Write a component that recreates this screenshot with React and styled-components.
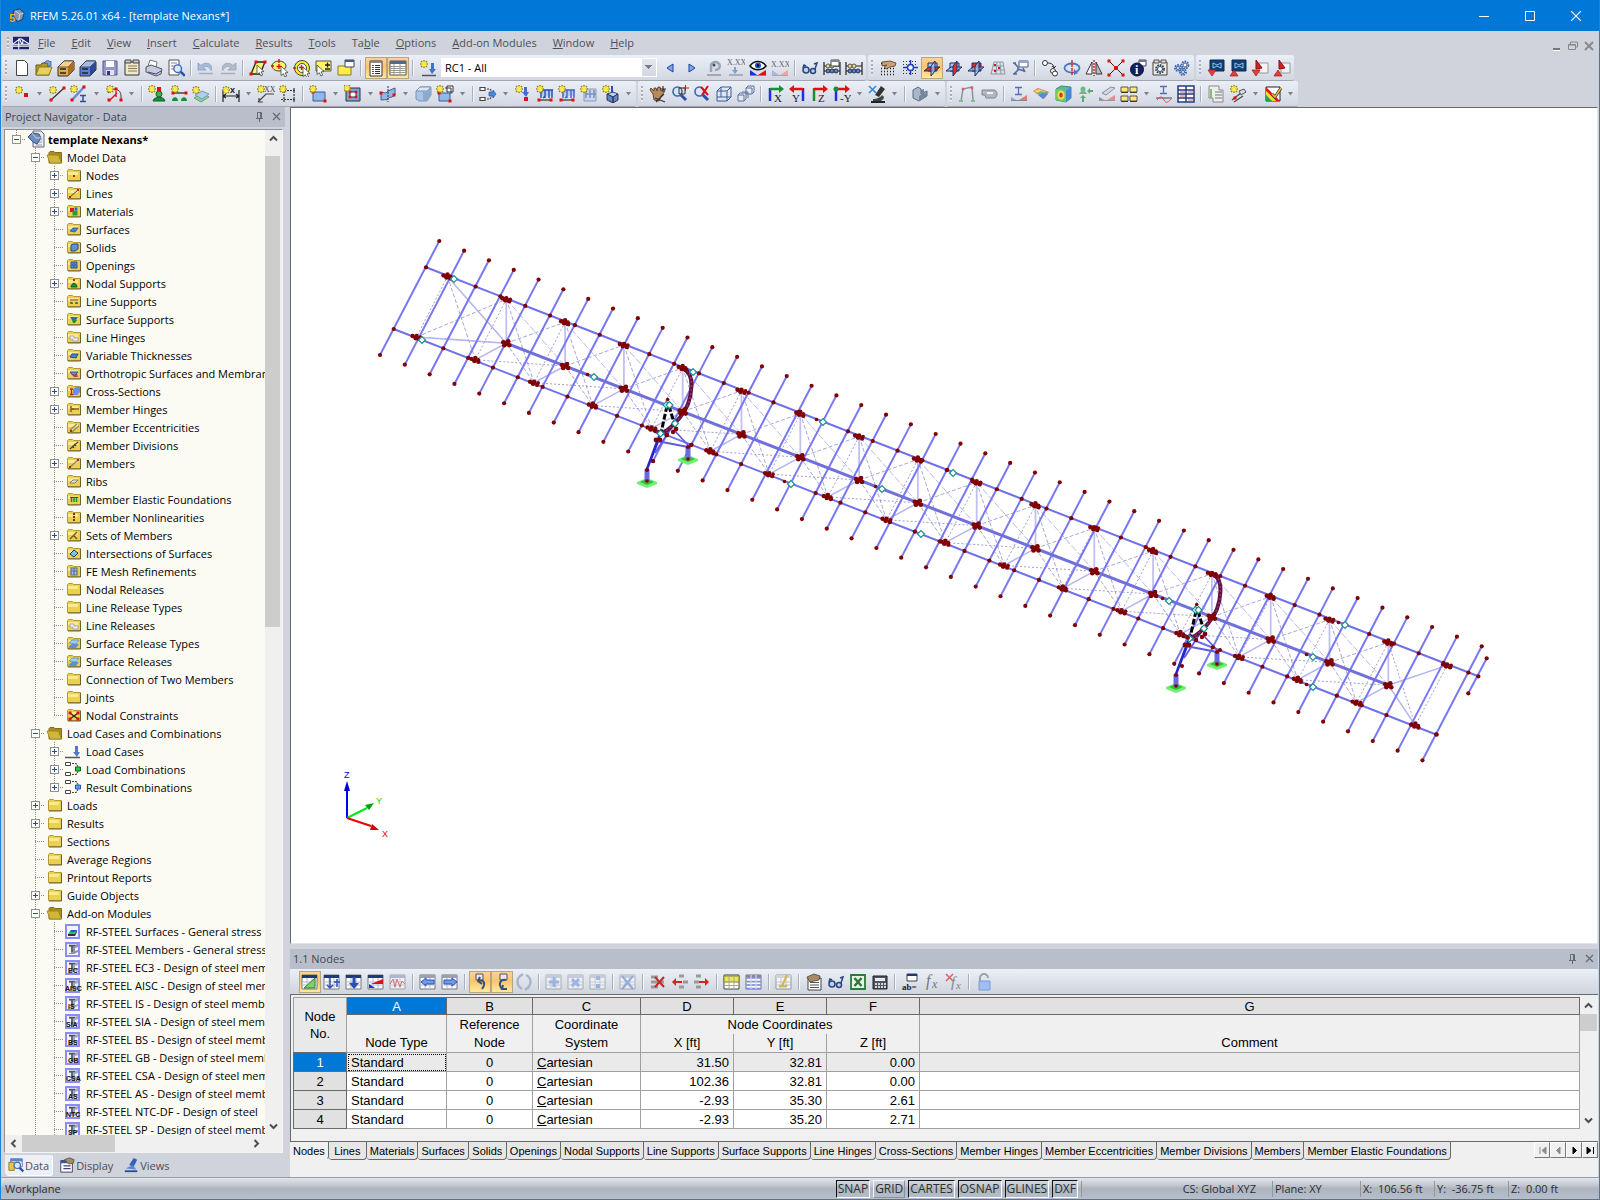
import { Fragment, useState } from "react";
import styled, { createGlobalStyle, css } from "styled-components";

const GlobalStyle = createGlobalStyle`
  * {
    box-sizing: border-box;
  }

  body {
    margin: 0;
    overflow: hidden;
    font-family: "Open Sans", "Noto Sans", sans-serif;
    font-size: 11px;
    color: #000;
  }

  button, select {
    font: inherit;
    color: inherit;
    margin: 0;
    padding: 0;
    border: 0;
    background: none;
  }

  svg {
    display: block;
    flex: none;
  }
`;

/* ---------- icon parts ---------- */

const RED = "#e01010";
const BLUE = "#2a50b8";
const GREEN = "#159035";

const L = ({ d, c = "#333", w = 1, f = "none", dash }) => (
  <path d={d} stroke={c} strokeWidth={w} fill={f} strokeDasharray={dash} />
);

const Dot = ({ x, y, c = RED, s = 3 }) => (
  <rect x={x - s / 2} y={y - s / 2} width={s} height={s} fill={c} />
);

const Star = ({ x = 0, y = 0 }) => (
  <g transform={`translate(${x} ${y})`}>
    <path d="M4 0v8M0 4h8M1 1l6 6M7 1l-6 6" stroke="#9c8a10" strokeWidth="1.6" />
    <path d="M4 1v6M1 4h6M2 2l4 4M6 2l-4 4" stroke="#fff04a" strokeWidth="1.2" />
  </g>
);

const Cursor = ({ x = 9, y = 7 }) => (
  <path
    transform={`translate(${x} ${y})`}
    d="M0 0l7 6.5-3 .4 1.7 3.2-1.8.9-1.6-3.3L0 9.5z"
    fill="#fff"
    stroke="#444"
    strokeWidth=".8"
  />
);

const Txt = ({ x, y, s = 8, c = "#222", children, b, serif }) => (
  <text
    x={x}
    y={y}
    fontSize={s}
    fill={c}
    fontWeight={b ? 700 : 400}
    fontFamily={serif ? "Liberation Serif, serif" : "Liberation Sans, sans-serif"}
  >
    {children}
  </text>
);

const Glass = ({ x = 0, y = 0 }) => (
  <g transform={`translate(${x} ${y})`}>
    <path d="M8 8l6 6" stroke="#2450b0" strokeWidth="3" />
    <circle cx="5.5" cy="5.5" r="4.5" fill="#d6e8fa" stroke="#3c64b8" strokeWidth="1.6" />
  </g>
);

const Cabinet = ({ f, t, s }) => (
  <Fragment>
    <path d="M1 8l6-6h9l1 1v8l-6 6H1z" fill={f} stroke="#333" />
    <path d="M1 8l6-6h10l-6 6z" fill={t} stroke="#333" strokeWidth=".7" />
    <path d="M11 8l6-5v8l-6 6z" fill={s} />
    <path d="M3 10h6M3 14h6" stroke="#222" strokeWidth="1.5" />
  </Fragment>
);

const Workplane = ({ flat, front, side }) => (
  <Fragment>
    <path d="M5 4h9v8H5z" fill={front} stroke="#16306a" />
    <path d="M1 12l5-4h11l-5 4z" fill={flat} stroke="#16306a" />
    <path d="M8 7l4-5v10l-4 5z" fill={side} stroke="#16306a" />
  </Fragment>
);

const AxisView = ({ a, b, t, flip }) => (
  <Fragment>
    {flip ? (
      <Fragment>
        <L d="M14 3v13" c={b} w="2.5" />
        <L d="M14 4H3" c={a} w="2.5" />
        <path d="M5 0v8L0 4z" fill={a} />
      </Fragment>
    ) : (
      <Fragment>
        <L d="M3 3v13" c={b} w="2.5" />
        <L d="M3 4h11" c={a} w="2.5" />
        <path d="M12 0v8l5-4z" fill={a} />
      </Fragment>
    )}
    <Txt x={flip ? 3 : 7} y="17" s="11" serif>
      {t}
    </Txt>
  </Fragment>
);

const MemberLoad = ({ c = BLUE }) => (
  <Fragment>
    <path d="M4 5h13v6H4z" fill="#b9caf0" />
    <L d="M4 5h13M5 5v8M9 5v8M13 5v8M16 5v8M7 13l2-2" c={c} w="1.4" />
    <L d="M2 15h14" c="#555" w="1.5" />
    <Dot x={3} y={15} />
    <Dot x={15} y={15} />
  </Fragment>
);

const Beads = () => (
  <Fragment>
    <L d="M1 3v13M17 3v13M1 7h16M1 12h16" c="#222" w="1.2" />
    <circle cx="5" cy="7" r="2" fill="#f5e080" stroke="#555" />
    <circle cx="9" cy="7" r="2" fill="#f5e080" stroke="#555" />
    <circle cx="5" cy="12" r="2" fill="#5b86d8" stroke="#234" />
    <circle cx="9" cy="12" r="2" fill="#5b86d8" stroke="#234" />
    <circle cx="13" cy="12" r="2" fill="#5b86d8" stroke="#234" />
  </Fragment>
);

const MiniTable = ({ tone = "#203a78", children }) => (
  <Fragment>
    <path d="M1 2h15v14H1z" fill="#fff" stroke="#777" />
    <path d="M1 2h15v3H1z" fill={tone} />
    <L d="M1 9h15M1 12h15M6 5v11M11 5v11" c="#b5b9c4" />
    {children}
  </Fragment>
);

const Gear = ({ x, y, r, c = "#3d62a8" }) => (
  <g>
    <circle cx={x} cy={y} r={r} fill="#c8d8ee" stroke={c} strokeWidth="1.8" strokeDasharray="1.6 1" />
    <circle cx={x} cy={y} r={r - 1.5} fill="#fff" stroke={c} />
  </g>
);

const Screen = () => (
  <Fragment>
    <path d="M3 1h14v11H3z" fill="#123f74" stroke="#0b2a50" />
    <L d="M6 4l4 2 4-2M6 9l4-2 4 2M6 4v5M14 4v5" c="#8fc4f0" />
  </Fragment>
);

const ICONS = {
  new: <path d="M3.5 1.5h8l3 3v12h-11z" fill="#fff" stroke="#444" />,
  open: (
    <Fragment>
      <path d="M1 6h5l1-2h7v12H1z" fill="#b89a20" stroke="#6b5a10" />
      <path d="M1 16l3-8h13l-3 8z" fill="#e6d060" stroke="#8a7620" />
      <path d="M9 4c2-3 5-3 6-1l1-1v5h-4l1-2c-1-1-2-1-4-1z" fill="#7ba6e0" stroke="#34588c" strokeWidth=".7" />
    </Fragment>
  ),
  archive: <Cabinet f="#e0a850" t="#f6d08c" s="#a86e20" />,
  archiveBlue: <Cabinet f="#5b80d0" t="#a4bcec" s="#2c4894" />,
  save: (
    <Fragment>
      <path d="M2 2h14v14H2z" fill="#9498c8" stroke="#555a88" />
      <path d="M5 2h8v6H5z" fill="#fff" />
      <path d="M5 11h8v5H5z" fill="#dfe2ee" />
      <path d="M6 12h3v4H6z" fill="#333a70" />
    </Fragment>
  ),
  notes: (
    <Fragment>
      <path d="M2 3h14v13H2z" fill="#f0e8cc" stroke="#333" />
      <path d="M2 1h6v3H2zM10 1h6v3h-6z" fill="#ccc" stroke="#444" />
      <L d="M5 7h9M5 9.5h9M5 12h9" c="#8a7a50" />
    </Fragment>
  ),
  print: (
    <Fragment>
      <path d="M5 1l7 2-1 6-8-2z" fill="#fff" stroke="#777" />
      <path d="M1 8l5-2 11 4-1 5-5 2L1 13z" fill="#c8ccd8" stroke="#556" />
      <path d="M3 13l8 2 5-3" fill="none" stroke="#3a4a80" />
    </Fragment>
  ),
  preview: (
    <Fragment>
      <path d="M2 1h10v15H2z" fill="#fff" stroke="#555" />
      <L d="M4 4h6M4 7h5M4 10h3" c="#888" />
      <g transform="translate(6 5) scale(.85)">
        <Glass />
      </g>
    </Fragment>
  ),
  undo: (
    <Fragment>
      <path d="M1 4v7h8L6 8.5c3-2 7-1 8 3 3-6-5-10-10-5z" fill="#a9bcdc" stroke="#8096b8" strokeWidth=".7" />
      <L d="M2 14.5h14" c="#a8afbb" w="1.5" />
    </Fragment>
  ),
  redo: (
    <Fragment>
      <path d="M17 4v7H9l3-2.5c-3-2-7-1-8 3-3-6 5-10 10-5z" fill="#b4bccb" stroke="#939dae" strokeWidth=".7" />
      <L d="M2 14.5h14" c="#a8afbb" w="1.5" />
    </Fragment>
  ),
  selPara: (
    <Fragment>
      <path d="M7 3h9l-5 12H2z" fill="#fff36a" stroke="#222" strokeWidth="1.3" />
      <Dot x={7} y={3} />
      <Dot x={16} y={3} />
      <Dot x={2} y={15} />
      <Cursor x={8} y={6} />
    </Fragment>
  ),
  selEllipse: (
    <Fragment>
      <ellipse cx="8" cy="7" rx="7" ry="5" fill="#fff36a" stroke="#444" />
      <L d="M8 0v4M8 5v5M5.5 7.5h5M0 7h3" c={RED} w="1.4" />
      <Cursor x={10} y={7} />
    </Fragment>
  ),
  selRing: (
    <Fragment>
      <circle cx="9" cy="9" r="7.5" fill="#ffef20" stroke="#444" />
      <circle cx="9" cy="9" r="4.5" fill="#fff" stroke="#444" />
      <L d="M8.5 6v5M6 8.5h5M0 9h3" c={RED} w="1.4" />
      <Cursor x={10} y={8} />
    </Fragment>
  ),
  selPlus: (
    <Fragment>
      <path d="M1 2h15v10H1z" fill="#fff36a" stroke="#555" />
      <L d="M10 6h5M12.5 3.5v5M10 10h5" c="#222" w="1.3" />
      <Cursor x={2} y={6} />
    </Fragment>
  ),
  selWindow: (
    <Fragment>
      <path d="M1 7h13v9H1z" fill="#ffed50" stroke="#8a7a20" />
      <path d="M8 1h9v7H8z" fill="#fff" stroke="#445" />
      <path d="M8 1h9v2H8z" fill="#445a88" />
    </Fragment>
  ),
  navigator: (
    <Fragment>
      <path d="M3 2h12v15H3z" fill="#fff" stroke="#333" />
      <path d="M3 2h12v2H3z" fill="#888" />
      <L d="M5 6.5h2M5 8.5h2M5 10.5h2M5 12.5h2M5 14.5h2" c="#a03030" />
      <L d="M8 6.5h5M8 8.5h5M8 10.5h5M8 12.5h5M8 14.5h5" c="#333" />
    </Fragment>
  ),
  tables: (
    <Fragment>
      <path d="M1 2h16v14H1z" fill="#fff" stroke="#555" />
      <path d="M1 2h16v3H1z" fill="#506898" />
      <L d="M1 7.5h16M1 9.5h16M1 11.5h16M1 13.5h16M5 5v11M11 5v11" c="#9a9a90" />
    </Fragment>
  ),
  loadStar: (
    <Fragment>
      <Star x={1} y={1} />
      <path d="M12 4h3v6h2l-4 5-3-5h2z" fill="#3f6fd0" />
      <L d="M3 16.5h14" c="#555" w="1.5" />
    </Fragment>
  ),
  prev: <path d="M12 5v8L6 9z" fill="#7aacf4" stroke="#1a3e9c" />,
  next: <path d="M6 5v8l6-4z" fill="#7aacf4" stroke="#1a3e9c" />,
  showLoads: (
    <Fragment>
      <path d="M6 13V8a4.500 4 0 1 1 4 3" fill="#d5dbe6" stroke="#9aa5b8" strokeWidth="2.5" />
      <circle cx="9" cy="6" r="1.500" fill="#444b5a" />
      <L d="M2 16h14" c="#a3a8b2" w="2" />
    </Fragment>
  ),
  loadValues: (
    <Fragment>
      <Txt x="0" y="6" s="8" c="#666" serif>X.XX</Txt>
      <L d="M8 8v5" c="#7f9fd4" w="2" />
      <path d="M5 11h6l-3 4z" fill="#7f9fd4" />
      <L d="M2 16h14" c="#999ea8" w="1.5" />
    </Fragment>
  ),
  eye: (
    <Fragment>
      <path d="M1 7c4-6 12-6 16 0-4 5-12 5-16 0z" fill="#fff" stroke="#111" strokeWidth="1.5" />
      <circle cx="9" cy="6.5" r="3" fill="#1e58c8" />
      <circle cx="9" cy="6.5" r="1.2" fill="#000" />
      <path d="M1 11v5h7z" fill="#1830e0" />
      <path d="M9 16l8-5v5z" fill={RED} />
      <L d="M1 16.5h16" c="#888" />
    </Fragment>
  ),
  resultValues: (
    <Fragment>
      <Txt x="0" y="8" s="8" c="#666" serif>X.XX</Txt>
      <path d="M1 11v5h7z" fill="#a8b4e8" />
      <path d="M9 16l8-5v5z" fill="#efa4a4" />
      <L d="M1 16.5h16" c="#aaa" />
    </Fragment>
  ),
  glasses: (
    <Fragment>
      <circle cx="5" cy="11" r="3" fill="#bcd0ee" stroke="#2b4480" strokeWidth="1.5" />
      <circle cx="12" cy="12" r="2.500" fill="#bcd0ee" stroke="#2b4480" strokeWidth="1.5" />
      <L d="M2 9l1-3 2 1M14 10l2-6-3 1" c="#2b4480" w="1.5" />
    </Fragment>
  ),
  beadsWin: (
    <Fragment>
      <Beads />
      <path d="M8 1h8v6H8z" fill="#fff" stroke="#445" />
      <path d="M8 1h8v2H8z" fill="#888" />
    </Fragment>
  ),
  beads: <Beads />,
  handGrid: (
    <Fragment>
      <L d="M2 9.5h15M2 12.500h15M2 15.500h15M2 4.500h3M12 5.500h5" c="#222" w="1.500" dash="1 2" />
      <path d="M3 3l8-1 6 2-1 3-5 1-4 2-2-2 3-2-5 1z" fill="#caa27a" stroke="#5a3a20" strokeWidth=".8" />
    </Fragment>
  ),
  gridSun: (
    <Fragment>
      <L d="M2 2.5h15M2 5.5h15M2 8.5h15M2 11.5h15M2 14.5h15" c="#333" dash="1 2" />
      <circle cx="9.5" cy="8.5" r="3" fill="#fff" stroke="#1f3fc0" strokeWidth="1.5" />
      <L d="M9.5 1v4M9.5 12v4M2 8.5h4M13 8.5h4" c="#1f3fc0" w="1.500" />
    </Fragment>
  ),
  planeXY: <Workplane flat="#f02828" front="#a4cbf4" side="rgba(150,195,245,.75)" />,
  planeYZ: <Workplane flat="rgba(164,203,244,.8)" front="#a4cbf4" side="#f02828" />,
  planeXZ: <Workplane flat="rgba(164,203,244,.6)" front="#f02828" side="rgba(150,195,245,.75)" />,
  skewGrid: (
    <Fragment>
      <L d="M5 3h9l2 12H2zM4 7h11M3 11h12M8 3L7 15M11 3l1 12" c="#8d97a8" />
      <Dot x={6} y={6} s={2} />
      <Dot x={10} y={9} s={2} />
      <Dot x={6} y={12} s={2} />
    </Fragment>
  ),
  snapWin: (
    <Fragment>
      <path d="M8 2h9v6H8z" fill="#fff" stroke="#445a88" />
      <path d="M8 2h9v2H8z" fill="#99a8c8" />
      <L d="M3 4l4 4v3l-4 4M2 4h3M7 10l6 2M12 9l2 4M2 15h4" c="#546a9c" w="1.6" />
    </Fragment>
  ),
  moveCopy: (
    <Fragment>
      <circle cx="4" cy="4" r="2.5" fill="#fff" stroke="#333" />
      <circle cx="12" cy="12" r="2.5" fill="#fff" stroke="#333" />
      <circle cx="14" cy="14.5" r="2.5" fill="#fff" stroke="#333" />
      <L d="M7 4c3 0 5 1 6 4M11 7l2 2 2-2" c="#333" />
    </Fragment>
  ),
  rotate: (
    <Fragment>
      <ellipse cx="9" cy="9" rx="7.5" ry="4.5" fill="none" stroke="#4a78c0" strokeWidth="1.8" />
      <L d="M9 1v16" c={RED} dash="3 1" w="1.3" />
      <path d="M11 10v6l4-2z" fill="#4a78c0" />
    </Fragment>
  ),
  mirror: (
    <Fragment>
      <path d="M7 3v12H1z" fill="#fff" stroke="#333" />
      <path d="M11 3v12h6z" fill="#b8bcc6" stroke="#333" />
      <L d="M9 1v16" c={RED} dash="2 1" w="1.3" />
    </Fragment>
  ),
  connect: (
    <Fragment>
      <L d="M2 2l14 14M16 2L2 16" c="#222" />
      {[[2, 2], [16, 2], [2, 16], [16, 16]].map(([x, y]) => (
        <Dot key={`${x}${y}`} x={x} y={y} />
      ))}
      <Dot x={9} y={9} s={4} />
    </Fragment>
  ),
  info: (
    <Fragment>
      <path d="M10 1h7v6h-7z" fill="#fff" stroke="#445" />
      <path d="M10 1h7v2h-7z" fill="#778" />
      <circle cx="8" cy="10.5" r="6.5" fill="#12205c" stroke="#0a1238" />
      <Txt x="6" y="15" s="12" c="#fff" b serif>i</Txt>
    </Fragment>
  ),
  gearBox: (
    <Fragment>
      <path d="M2 3h14v13H2z" fill="#f2ead8" stroke="#444" />
      <L d="M3 1h5v3H3zM10 1h5v3h-5z" c="#555" f="#ddd" />
      <Gear x={9} y={10} r={4} c="#304468" />
    </Fragment>
  ),
  gears: (
    <Fragment>
      <Gear x={5} y={9} r={3} />
      <Gear x={12} y={6} r={3.5} />
      <Gear x={10} y={13} r={3} />
    </Fragment>
  ),
  exportDown: (
    <Fragment>
      <Screen />
      <path d="M1 11h8l-4 6z" fill="#e04040" stroke="#a01818" strokeWidth=".7" />
    </Fragment>
  ),
  exportUp: (
    <Fragment>
      <Screen />
      <path d="M1 17h8l-4-6z" fill="#e04040" stroke="#a01818" strokeWidth=".7" />
    </Fragment>
  ),
  pdfDown: (
    <Fragment>
      <path d="M8 4h9v10H8z" fill="#f4f4f4" stroke="#999" />
      <path d="M5 1l6 8-6 1z" fill="#d82020" stroke="#8c1010" />
      <path d="M1 11h8l-4 6z" fill="#e04040" stroke="#a01818" strokeWidth=".7" />
    </Fragment>
  ),
  pdfUp: (
    <Fragment>
      <path d="M8 4h9v10H8z" fill="#f4f4f4" stroke="#999" />
      <path d="M6 1l6 8-6 1z" fill="#d82020" stroke="#8c1010" />
      <path d="M1 17h8l-4-6z" fill="#e04040" stroke="#a01818" strokeWidth=".7" />
    </Fragment>
  ),

  newNode: (
    <Fragment>
      <Star x={2} y={1} />
      <Dot x={13} y={10} s={4} />
    </Fragment>
  ),
  newLine: (
    <Fragment>
      <L d="M3 15L16 3" c="#333" w="1.3" />
      <Dot x={16} y={3} />
      <Dot x={3} y={15} />
      <Star x={1} y={1} />
    </Fragment>
  ),
  newMember: (
    <Fragment>
      <L d="M2 15L14 2" c="#5f8fd8" w="2.5" />
      <Dot x={14} y={2} />
      <Dot x={2} y={15} />
      <Star x={0} y={0} />
      <L d="M10 10.5h6M10 16.5h6M13 10v7" c="#3050a0" w="1.5" />
    </Fragment>
  ),
  newArc: (
    <Fragment>
      <path d="M3 8C7 2 16 3 16 11v4" fill="none" stroke="#444" />
      <L d="M4 16l8-8M11 6v6" c={RED} w="1.3" />
      <Dot x={4} y={15} />
      <Dot x={16} y={15} />
      <Dot x={11} y={4} />
      <Star x={1} y={0} />
    </Fragment>
  ),
  nodeSupport: (
    <Fragment>
      <circle cx="11" cy="9" r="3" fill="#3fae55" stroke="#16632a" />
      <path d="M5 16c1-5 11-5 12 0z" fill={GREEN} stroke="#16632a" />
      <Dot x={11} y={4} s={4} />
      <Star x={0} y={0} />
    </Fragment>
  ),
  lineSupport: (
    <Fragment>
      <L d="M4 8h12" c="#444" w="1.5" />
      <Dot x={3} y={8} />
      <Dot x={16} y={8} />
      <path d="M2 16c0-5 6-5 6 0zM11 16c0-5 6-5 6 0z" fill={GREEN} />
      <Star x={1} y={0} />
    </Fragment>
  ),
  surfSupport: (
    <Fragment>
      <path d="M2 13l8-5 7 4-8 5z" fill="#8fcf9c" stroke="#5ea870" />
      <path d="M3 10l7-4 7 3-7 5z" fill="#b0cdf0" stroke="#7b98c4" />
      <Star x={0} y={1} />
    </Fragment>
  ),
  dimension: (
    <Fragment>
      <L d="M1 5v12M17 5v12M1 11h16M4 9l-3 2 3 2M14 9l3 2-3 2" c="#222" w="1.200" />
      <Txt x="8" y="8" s="9" b>x</Txt>
      <Star x={0} y={1} />
    </Fragment>
  ),
  comment: (
    <Fragment>
      <L d="M17 9H9l-8 8M2 13v4h4" c="#444" w="1.2" />
      <Txt x="7" y="7" s="8" c="#444" serif>XX</Txt>
      <Star x={0} y={0} />
    </Fragment>
  ),
  region: (
    <Fragment>
      <L d="M5 3v14M15 3v14M2 5.500h15M2 14.500h15" c="#333" dash="2 1" w="1.2" />
      <Star x={0} y={0} />
    </Fragment>
  ),
  newSurface: (
    <Fragment>
      <path d="M4 7h12v9H4z" fill="#8db8e8" stroke="#3c5c94" />
      <Dot x={4} y={7} />
      <Dot x={16} y={16} />
      <Star x={0} y={0} />
    </Fragment>
  ),
  opening: (
    <Fragment>
      <path d="M2 3h14v13H2z" fill="#7ba4dc" stroke="#333" />
      <path d="M6 7h6v5H6z" fill="#fff" stroke="#333" />
      {[[6, 7], [12, 7], [6, 12], [12, 12]].map(([x, y]) => (
        <Dot key={`${x}${y}`} x={x} y={y} s={2.5} />
      ))}
      <Star x={-1} y={-1} />
    </Fragment>
  ),
  curved: (
    <Fragment>
      <path d="M2 8c3-2 4 2 7-2l7-3v7c-5 4-6 1-8 5-2-1-3 0-6 0z" fill="#8db8e8" stroke="#3c5c94" />
      <L d="M9 1v16" c="#333" dash="2 1" />
      <Dot x={2} y={8} />
      <Dot x={15} y={10} />
    </Fragment>
  ),
  solid: (
    <Fragment>
      <path d="M2 6l4-4h11v8l-4 6H5l-3-2z" fill="#a9c4e4" stroke="#7d93b4" />
      <path d="M2 6l4-4h11l-4 4z" fill="#dbe8f6" stroke="#7d93b4" />
      <path d="M9 6h4l4-4v8l-4 6H9z" fill="#8fa9cc" />
    </Fragment>
  ),
  newSet: (
    <Fragment>
      <L d="M11 1h6v6h-6zM9 3h6v6" c="#333" f="#fff" />
      <path d="M3 8h11v8H3z" fill="#8db8e8" stroke="#3c5c94" />
      <Dot x={3} y={8} />
      <Dot x={14} y={16} />
      <Star x={0} y={0} />
    </Fragment>
  ),
  combine: (
    <Fragment>
      <L d="M1 2.500h5v3H1zM1 12.500h5v3H1z" c="#444" f="#fff" w="1.200" />
      <L d="M8 4h3l2 3M8 14h3l2-3" c="#444" dash="2 1" w="1.200" />
      <path d="M10 7h4v-2l3 4-3 4v-2h-4z" fill="#4a88e0" stroke="#2858a8" strokeWidth=".7" />
    </Fragment>
  ),
  nodalLoad: (
    <Fragment>
      <path d="M10 2h3v5h2l-3 5-4-5h2z" fill="#3f6fd0" />
      <Dot x={12} y={14} s={4} />
      <Star x={1} y={0} />
    </Fragment>
  ),
  memberLoad: (
    <Fragment>
      <MemberLoad />
      <Star x={0} y={0} />
    </Fragment>
  ),
  lineLoad: (
    <Fragment>
      <MemberLoad c="#4564c8" />
      <Star x={0} y={0} />
    </Fragment>
  ),
  surfLoad: (
    <Fragment>
      <path d="M4 4h12v12H4z" fill="#c6d6ee" stroke="#8c9cb8" />
      <L d="M6 5v8M10 5v8M14 5v8M5 9h11" c="#7a90c0" w="1.5" />
      <Star x={0} y={0} />
    </Fragment>
  ),
  solidLoad: (
    <Fragment>
      <path d="M5 9l6-2 5 2-5 3z" fill="#b8d2f0" stroke="#446" />
      <path d="M5 9v6l6 3v-6zM16 9v6l-5 3v-6z" fill="#6088c8" stroke="#335" />
      <L d="M10 1v7" c={BLUE} w="2" />
      <Star x={0} y={0} />
    </Fragment>
  ),
  hand: (
    <Fragment>
      <path d="M5 15L4 9 1 5l1-2 3 3V3h2l1 3 1-4h2l1 4 3-2 1 2-4 5-2 5z" fill="#b98a60" stroke="#4a3020" strokeWidth=".8" />
      <L d="M14 1v6M11 4h6M6 13l10 4M15 9L7 17" c="#333" w="1.200" />
    </Fragment>
  ),
  zoomWin: (
    <Fragment>
      <Glass x={1} y={1} />
      <L d="M8 3h6v6H8z" c="#333" />
      <L d="M14.500 0v6M12 3h6" c={RED} />
    </Fragment>
  ),
  zoomX: (
    <Fragment>
      <Glass x={1} y={1} />
      <L d="M8 2l7 8M15 1l-6 9" c={RED} w="2" />
    </Fragment>
  ),
  cube: <L d="M2 6h10v10H2zM2 6l4-4h10v10l-4 4M12 6l4-4M6 2v10H2M6 12h10" c="#3c5c94" f="rgba(220,232,248,.6)" />,
  cubes: (
    <L d="M1 10h6v6H1zM1 10l2-2h6v6l-2 2M5 7h6v6M9 3h6v6H9zM9 3l2-2h6v6l-2 2" c="#5d7198" f="rgba(230,236,246,.8)" />
  ),
  viewX: <AxisView a={GREEN} b="#2030e0" t="X" />,
  viewY: <AxisView a={RED} b="#2030e0" t="Y" flip />,
  viewZ: <AxisView a={RED} b={GREEN} t="Z" />,
  viewMY: (
    <Fragment>
      <AxisView a={RED} b="#2030e0" t="-Y" />
      <circle cx="3" cy="4" r="2.500" fill={GREEN} />
    </Fragment>
  ),
  microscope: (
    <Fragment>
      <path d="M7 10l6-9 4 3-6 8z" fill="#333" />
      <path d="M5 14c4 0 8-2 9-4l2 2c0 2-2 3-3 4H5z" fill="#444" />
      <L d="M3 17h14" c="#222" w="2" />
      <L d="M1 1l7 7M8 1L1 8" c="#2f88d8" w="1.5" />
    </Fragment>
  ),
  render: (
    <Fragment>
      <path d="M2 5l5-3 3 2v5l6-3v5l-8 5-6-3z" fill="#a8b6c8" stroke="#5a6a80" />
      <path d="M8 16v-5l2-1v-5l3-1v5l3-2v4z" fill="#74859c" />
    </Fragment>
  ),
  frame: (
    <Fragment>
      <L d="M3 16L5 4l9-2 1 13" c="#8c93a0" w="1.5" />
      <Dot x={5} y={4} s={2.5} c="#e06060" />
      <Dot x={14} y={3} s={2.5} c="#e06060" />
      <path d="M1 15h4v2H1zM13 15h4v2h-4z" fill="#80c090" />
    </Fragment>
  ),
  camera: (
    <Fragment>
      <path d="M2 5h12c4 0 4 8 0 8H6l-1-3H2z" fill="#b2b7c0" stroke="#80868f" />
      <path d="M7 7h6v2H7z" fill="#f2f2f2" />
    </Fragment>
  ),
  memberRes: (
    <Fragment>
      <L d="M5 2.5h7M5 9.5h7M8.5 2v8" c="#5a6fa8" w="1.300" />
      <path d="M1 12v4h7z" fill="#90a0e0" />
      <path d="M9 15l8-5v5z" fill="#e87878" />
      <L d="M1 15.5h16" c="#888" />
    </Fragment>
  ),
  surfRes: (
    <Fragment>
      <path d="M1 6l5-3 11 4-5 7z" fill="#e87070" />
      <path d="M2 6l5-2 7 3-3 4z" fill="#f0d850" />
      <path d="M5 8l4-2 7 2-5 6z" fill="#60c080" />
      <path d="M6 10l5-2 5 1-5 5z" fill="#5888dc" />
    </Fragment>
  ),
  solidRes: (
    <Fragment>
      <path d="M2 4l5-3 10 1v11l-5 4-10-2z" fill="#58b8a0" stroke="#3c9070" />
      <path d="M2 4l10 2v11l-10-2z" fill="#78c860" />
      <ellipse cx="7" cy="10" rx="3.5" ry="4.5" fill="#f0e040" />
      <ellipse cx="7" cy="10" rx="1.8" ry="2.5" fill="#e03030" />
      <path d="M12 6l5-4v11l-5 4z" fill="#4888d0" />
    </Fragment>
  ),
  reactions: (
    <Fragment>
      <circle cx="7" cy="4" r="2.5" fill="#6fb882" />
      <path d="M3 9c1-4 7-4 8 0z" fill="#6fb882" />
      <path d="M7 10l3 3H8v4H6v-4H4zM11 6l3-3v2h3v2h-3v2z" fill="#5fa873" />
    </Fragment>
  ),
  sections: (
    <Fragment>
      <path d="M4 8l9-6 4 1-9 7z" fill="#d3dae6" stroke="#7f8ca4" />
      <path d="M1 12v4h7z" fill="#8090e0" />
      <path d="M9 15l8-5v5z" fill="#e88c8c" />
      <L d="M1 15.5h16" c="#999" />
    </Fragment>
  ),
  multiView: (
    <Fragment>
      <path d="M1 2h7v5H1zM10 2h7v5h-7zM1 11h7v5H1zM10 11h7v5h-7z" fill="#ffe873" stroke="#555" />
      <L d="M1 7.5h7M10 7.5h7M1 16.5h7M10 16.5h7" c="#443c14" />
    </Fragment>
  ),
  diagram: (
    <Fragment>
      <L d="M5 1.5h7M5 8.5h7M8.5 1v8" c="#5a6fa8" w="1.3" />
      <L d="M1 13h16" c="#446" />
      <L d="M2 15c3-4 5-4 7 0s5 2 7-1" c="#e05050" />
    </Fragment>
  ),
  resTables: (
    <Fragment>
      <path d="M1 1h16v16H1z" fill="#fff" stroke="#223c80" strokeWidth="1.5" />
      <L d="M1 5h16M1 9h16M1 13h16M9 1v16" c="#223c80" w="1.5" />
      <L d="M3 7h5M11 7h5M3 11h5M11 15h5" c="#e06060" />
    </Fragment>
  ),
  legend: (
    <Fragment>
      <path d="M2 1h10v4h4v12H6V13H2z" fill="#eee" stroke="#888" />
      <L d="M4 4v9" c="#80c070" w="2" />
      <L d="M8 7h7M8 10h7M8 13h7" c="#777" />
    </Fragment>
  ),
  deform: (
    <Fragment>
      <L d="M3 15l9-7 4-1M5 17l9-6" c="#555" w="1.5" />
      <path d="M10 6l5-2 2 3-5 3z" fill="#d8dce4" stroke="#555" />
      <Dot x={6} y={13} />
      <Star x={1} y={0} />
    </Fragment>
  ),
  palette: (
    <Fragment>
      <path d="M2 2h14v14H2z" fill="#fff" stroke="#222" />
      <path d="M2 2l14 14H12L2 6z" fill="#e01818" />
      <path d="M2 6l10 10H8L2 10z" fill="#f0e020" />
      <path d="M2 10l6 6H2z" fill="#18a838" />
      <L d="M8 9l3 3 6-9" c="#333" w="3" />
      <L d="M8 9l3 3 6-9" c="#e8c040" w="1.500" />
    </Fragment>
  ),

  tblEdit: (
    <MiniTable>
      <path d="M3 15L14 5v10z" fill="#7fd06a" stroke="#2f8030" />
    </MiniTable>
  ),
  tblInsert: (
    <MiniTable>
      <L d="M7 5v10M4 12l3 3 3-3M14 14V6M11 9h6" c={BLUE} w="1.5" />
    </MiniTable>
  ),
  tblDown: (
    <MiniTable>
      <L d="M9 4v8" c={BLUE} w="3" />
      <path d="M4 10h10l-5 6z" fill={BLUE} />
    </MiniTable>
  ),
  tblResult: (
    <MiniTable>
      <path d="M2 11v4h6z" fill="#1830e0" />
      <path d="M4 11L16 6v5z" fill={RED} />
    </MiniTable>
  ),
  tblWave: (
    <g opacity=".55">
      <MiniTable tone="#8090b8">
        <L d="M1 11l3-5 2 8 2-8 3 8 2-6 3 3" c={RED} />
      </MiniTable>
    </g>
  ),
  colPrev: (
    <MiniTable tone="#9aa0b0">
      <path d="M2 9l5-4v2h8v4H7v2z" fill="#6e9ce8" stroke={BLUE} />
    </MiniTable>
  ),
  colNext: (
    <MiniTable tone="#9aa0b0">
      <path d="M16 9l-5-4v2H3v4h8v2z" fill="#6e9ce8" stroke={BLUE} />
    </MiniTable>
  ),
  stepA: (
    <Fragment>
      <path d="M5 1h7v6H5z" fill="#e8e8ee" stroke="#555" />
      <L d="M8 8c5-2 7 3 3 8M9 4L7 8l4 3" c="#34507c" w="2" />
    </Fragment>
  ),
  stepB: (
    <Fragment>
      <path d="M7 1h7v6H7z" fill="#e8e8ee" stroke="#555" />
      <L d="M13 7c-6-1-8 4-4 9M10 12l-1 4 5 0" c="#34507c" w="2" />
    </Fragment>
  ),
  refresh: <L d="M7 2c-6 3-6 10 0 14M11 2c6 3 6 10 0 14M4 4l4-3M14 14l-4 3" c="#a9b4c8" w="2.5" />,
  rowA: (
    <g opacity=".5">
      <MiniTable tone="#aab2c4" />
      <L d="M9 4v10M4 9h10" c="#5f86dc" w="3" />
    </g>
  ),
  rowB: (
    <g opacity=".5">
      <MiniTable tone="#aab2c4" />
      <L d="M5 6l7 7M12 6l-7 7" c="#5f86dc" w="3" />
    </g>
  ),
  rowC: (
    <g opacity=".5">
      <MiniTable tone="#aab2c4" />
      <L d="M9 3v4M9 11v4" c="#5f86dc" w="4" />
    </g>
  ),
  rowX: (
    <g opacity=".5">
      <MiniTable tone="#aab2c4" />
      <L d="M3 3l11 13M14 3L3 16" c="#4a78cc" w="2" />
    </g>
  ),
  delRow: (
    <Fragment>
      <L d="M2 4h7M2 9h13M2 14h7" c="#999" w="3" />
      <L d="M6 4l9 10M15 4L6 14" c="#d82020" w="2" />
    </Fragment>
  ),
  delLeft: (
    <Fragment>
      <L d="M8 3h5M8 14h5M12 9h5" c="#999" w="3" />
      <path d="M1 9l4-4v3h6v2H5v3z" fill="#d82020" />
    </Fragment>
  ),
  delRight: (
    <Fragment>
      <L d="M3 3h5M3 14h5M1 9h5" c="#999" w="3" />
      <path d="M16 9l-4-4v3H6v2h6v3z" fill="#d82020" />
    </Fragment>
  ),
  tblYellow: (
    <Fragment>
      <path d="M1 2h15v14H1z" fill="#fff" stroke="#444" />
      <path d="M1 3h15v6H1z" fill="#e8e860" stroke="#888020" />
      <L d="M1 12.500h15M6 3v13M11 3v13" c="#a8a894" />
    </Fragment>
  ),
  tblBlue: (
    <Fragment>
      <MiniTable tone="#889" />
      <L d="M1 5h15M1 8.5h15M1 12h15M1 15.5h15" c="#7c8ce8" w="1.5" />
      <L d="M6 2v14M11 2v14" c="#e8e8f4" />
    </Fragment>
  ),
  pencilTbl: (
    <g opacity=".7">
      <MiniTable tone="#ccc" />
      <L d="M12 2L7 13M4 14c3-3 5 2 8-2" c="#d0a800" w="2" />
    </g>
  ),
  handTable: (
    <Fragment>
      <path d="M3 5h13v12H3z" fill="#fff" stroke="#444" />
      <L d="M5 9.500h9M5 12h9M5 14.500h9" c="#555" />
      <path d="M2 4l7-3 6 2-1 4-5 1-4 1z" fill="#a98a68" stroke="#443" strokeWidth=".8" />
    </Fragment>
  ),
  excel: (
    <Fragment>
      <path d="M2 2h14v14H2z" fill="#e6f2e6" stroke="#2a7a38" strokeWidth="1.800" />
      <L d="M5.500 5l7 8M12.500 5l-7 8" c="#2a7a38" w="2.500" />
    </Fragment>
  ),
  calc: (
    <Fragment>
      <path d="M2 3h14v13H2z" fill="#50545c" stroke="#222" />
      <path d="M4 5h10v3H4z" fill="#e8ecf0" />
      <L d="M4 11h11M4 14h11" c="#fff" w="1.5" dash="2 1" />
    </Fragment>
  ),
  abWin: (
    <Fragment>
      <path d="M6 1h10v7H6z" fill="#fff" stroke="#444" />
      <path d="M6 1h10v2H6z" fill="#203a78" />
      <Txt x="1" y="17" s="9" b serif>ab=</Txt>
    </Fragment>
  ),
  fx: (
    <Fragment>
      <Txt x="3" y="13" s="16" c="#777" serif><tspan fontStyle="italic">f</tspan></Txt>
      <Txt x="9" y="15" s="12" c="#777" serif><tspan fontStyle="italic">x</tspan></Txt>
    </Fragment>
  ),
  fxDel: (
    <Fragment>
      <L d="M1 1l7 7M8 1L1 8" c="#e06060" w="1.5" />
      <Txt x="6" y="14" s="15" c="#888" serif><tspan fontStyle="italic">f</tspan></Txt>
      <Txt x="11" y="16" s="11" c="#888" serif><tspan fontStyle="italic">x</tspan></Txt>
    </Fragment>
  ),
  lock: (
    <Fragment>
      <path d="M5 8V5a4 4 0 0 1 8 0" fill="none" stroke="#9aa2ac" strokeWidth="2" />
      <path d="M4 8h11v9H4z" fill="#a0bdf4" stroke="#7d9ad4" />
    </Fragment>
  ),

  appLogo: (
    <Fragment>
      <path d="M5 3l7-2 5 5-2 7-6 2-4-6z" fill="#8297b4" stroke="#24344c" />
      <path d="M7 3l5 4 4-1M12 7l-1 7" fill="none" stroke="#d4deec" />
      <Txt x="0" y="16" s="13" c="#f4a800" b>5</Txt>
    </Fragment>
  ),
  dlubal: (
    <Fragment>
      <path d="M0 2h18v14H0z" fill="#1a2470" />
      <L d="M0 10.500h18M0 12.500h18" c="#fff" w="1.200" />
      <L d="M6.500 4v12M8 4L0 10M7 4l3 6M8.500 4L18 10M11 10V6" c="#fff" w="1.200" />
    </Fragment>
  ),
  project: (
    <Fragment>
      <path d="M6 1h8l3 3v13H6z" fill="#e8ebf0" stroke="#667" />
      <L d="M9 9h6M9 12h6M9 15h6" c="#99a" />
      <path d="M1 7l4-4 7 1 2 4-4 6-4-2z" fill="#6d8dbd" stroke="#38547c" />
      <path d="M5 3l4 5M9 8l5 0" stroke="#c3d3e8" />
    </Fragment>
  ),
  dataTab: (
    <Fragment>
      <path d="M3 2h13v9H3z" fill="#fff" stroke="#4a6cb0" />
      <path d="M3 2h13v3H3z" fill="#5b86d8" />
      <path d="M1 6h6v9H1z" fill="#e8c840" stroke="#8a7620" />
      <g transform="translate(6 5) scale(.8)">
        <Glass />
      </g>
    </Fragment>
  ),
  displayTab: (
    <Fragment>
      <path d="M2 4h13v13H2z" fill="#fff" stroke="#336" />
      <path d="M2 4h13v3H2z" fill="#3058b0" />
      <L d="M5 10h8M5 13h8" c="#446" w="1.5" />
      <path d="M6 3l6-2 5 2-1 4-5 1z" fill="#a98a68" stroke="#443" strokeWidth=".8" />
    </Fragment>
  ),
  viewsTab: (
    <Fragment>
      <path d="M7 9l5-8 4 2-4 8z" fill="#3560b8" />
      <path d="M3 13l8-4 4 5z" fill="#5b86d8" />
      <L d="M2 16h14" c="#244a90" w="2" />
    </Fragment>
  ),
  loadCase: (
    <Fragment>
      <path d="M10 4h3v6h2l-3 5-4-5h2z" fill="#4a7ad8" />
      <L d="M0 15.500h15" c="#555" w="1.5" />
    </Fragment>
  ),
  loadCombo: (
    <Fragment>
      <L d="M.5 2.500h5v3h-5zM.5 12.500h5v3h-5z" c="#444" f="#fff" />
      <L d="M7 3.500h4l2 3M7 14.500h4l2-3" c="#444" w="1.200" dash="2 1" />
      <path d="M10.500 7h5v4h-5z" fill="#28c840" stroke="#116020" />
    </Fragment>
  ),
  resultCombo: (
    <Fragment>
      <L d="M.5 2.500h5v3h-5zM.5 12.500h5v3h-5z" c="#444" f="#fff" />
      <L d="M7 3.500h4l2 3M7 14.500h4l2-3" c="#444" w="1.200" dash="2 1" />
      <path d="M10.500 7h5v4h-5z" fill="#5a9cf0" stroke="#2858a8" />
    </Fragment>
  ),
};

/* emblems laid on top of the tree folders */
const EMBLEMS = {
  node: <Dot x={9} y={10} c="#c02020" s={2} />,
  line: (
    <Fragment>
      <L d="M5 13l8-7" c="#444" />
      <Dot x={5} y={13} c="#c02020" s={2} />
      <Dot x={13} y={6} c="#c02020" s={2} />
    </Fragment>
  ),
  material: (
    <Fragment>
      <Dot x={7} y={8} c="#d02020" s={4} />
      <Dot x={10} y={11} c="#20a030" s={5} />
      <Dot x={11} y={7} c="#3060d0" />
    </Fragment>
  ),
  surface: <path d="M5 11l3-3h5l-3 4z" fill="#4a80d0" stroke="#3a68a8" />,
  solid: <path d="M6 7l2-1h5v5l-3 2H6z" fill="#5d90d4" stroke="#234a88" />,
  opening: <path d="M6 6h6v6H6zM8 8v2h2V8z" fill="#5d90d4" stroke="#234a88" fillRule="evenodd" />,
  support: (
    <Fragment>
      <path d="M6 13c1-5 5-5 6 0z" fill={GREEN} stroke="#0d5a20" />
      <Dot x={9} y={6} c="#d02020" s={2} />
    </Fragment>
  ),
  lineSupport: (
    <Fragment>
      <L d="M5 8h8" c="#b02020" />
      <path d="M5 12c0-3 3-3 3 0zM10 12c0-3 3-3 3 0z" fill={GREEN} />
    </Fragment>
  ),
  surfaceSupport: (
    <Fragment>
      <path d="M5 7h8l-2 3H7z" fill="#3a68a8" />
      <path d="M7 10h5l-2 3H8z" fill={GREEN} />
    </Fragment>
  ),
  hinge: <path d="M5 8h4v2h4v3H8v-2H5z" fill="#f4f4f8" stroke="#98a0b0" strokeWidth=".8" />,
  thick: <path d="M5 11l2-3h6l-2 4z" fill="#4a80d0" stroke="#234a88" />,
  ortho: (
    <Fragment>
      <path d="M5 9l4 4h4l-1-3z" fill="#d03060" />
      <path d="M5 8h8l-3 3H8z" fill="#7090c8" stroke="#345a98" />
    </Fragment>
  ),
  section: (
    <Fragment>
      <path d="M8 7l3-2h4v5l-3 3H8z" fill="#6c8cf0" />
      <L d="M5 7h3M5 12.5h3M6.500 7v5" c="#c02020" w="1.300" />
    </Fragment>
  ),
  memberHinge: <L d="M6 6v6M6 9h8M8 8v2" c="#8a5a20" w="1.5" />,
  ecc: (
    <Fragment>
      <L d="M5 12l7-6M7 14l7-6" c="#8a8474" w="1.200" />
      <Dot x={6} y={13} c="#c02020" s={2} />
    </Fragment>
  ),
  member: (
    <Fragment>
      <L d="M5 13l8-7" c="#8d8877" w="1.600" />
      <Dot x={5} y={13} c="#c02020" s={2} />
      <Dot x={13} y={6} c="#c02020" s={2} />
    </Fragment>
  ),
  division: <L d="M5 13l8-7M7 10l2 2M9 8l2 2" c="#444" w="1.200" />,
  rib: <path d="M5 11l3-3h5l-3 3z" fill="#e8e8e8" stroke="#7d7d7d" />,
  elastic: (
    <Fragment>
      <L d="M5 7.500h8" c="#b02020" w="1.200" />
      <L d="M6.500 8v4M9 8v4M11.500 8v4" c={GREEN} w="1.500" />
    </Fragment>
  ),
  nonlinear: <L d="M9 5v9" c="#803020" w="2" dash="2 1" />,
  sets: <L d="M5 13l7-7M8 9l4 4" c="#7a5a20" w="1.5" />,
  intersect: <path d="M9 6l4 3-4 4-4-3z" fill="#7fc4e8" stroke="#203860" />,
  mesh: <L d="M6 6h6v7H6zM9 6v7M6 9h6" c="#5a6c8c" w="1.2" f="#9cc0e6" />,
  release: (
    <Fragment>
      <path d="M3 13l4-3h7l-3 4H5z" fill="#5f8fd0" />
      <path d="M4 9l3-3h7l-3 4z" fill="#a8cbea" stroke="#5a84b8" strokeWidth=".7" />
    </Fragment>
  ),
  constraint: (
    <Fragment>
      <L d="M5 7l8 6M13 7l-8 6" c="#222" w="1.2" />
      <Dot x={5} y={7} />
      <Dot x={13} y={7} />
      <Dot x={5} y={13} />
      <Dot x={13} y={13} />
    </Fragment>
  ),
};

const Svg = ({ children, size = 18 }) => (
  <svg width={size} height={size} viewBox="0 0 18 18" aria-hidden="true">
    {children}
  </svg>
);

const FolderIcon = ({ emblem, open }) => (
  <Svg>
    {open ? (
      <Fragment>
        <path d="M3 15V4.500l1-1h4l1 1h6.500V15z" fill="#a98c1c" stroke="#80701e" />
        <path d="M1 7h11.500l3 8H4z" fill="#d2b63a" stroke="#94801f" strokeWidth=".8" />
      </Fragment>
    ) : (
      <Fragment>
        <path d="M2.500 14.500v-10l1-1h4l1 1h7v10z" fill="#ecd050" stroke="#b39a3a" />
        <path d="M3 6h10v3H3z" fill="#faec8c" />
        <path d="M15.500 5v10H3" fill="none" stroke="#6e6230" />
      </Fragment>
    )}
    {EMBLEMS[emblem]}
  </Svg>
);

const ModuleIcon = ({ tag }) => (
  <Svg>
    <rect x="1" y="3" width="13" height="13" fill="#f4f4f8" stroke="#8c8cf8" strokeWidth="2" />
    {tag === "surf" ? (
      <Fragment>
        <path d="M3 12l3-4h6l-2 4z" fill="#28c078" />
        <path d="M6 8h6l-2 2H5z" fill="#3050d0" />
        <path d="M3 12h7l2-4v2l-2 4H3z" fill="#333" />
      </Fragment>
    ) : (
      <Fragment>
        <path d="M4 5h5l4-1v3l-3 1v3l3-1v2l-4 2H4v-1h2V7H4z" fill={tag ? "#a4a9b4" : "#8c929e"} />
        <L d="M4 5.500h6M7 6v6" c="#4a5468" w="1.5" />
        {tag && (
          <Txt x={tag.length > 3 ? 0 : tag.length > 2 ? 1 : 3} y="15" s="7" c="#111" b>
            {tag}
          </Txt>
        )}
      </Fragment>
    )}
  </Svg>
);

/* ---------- window frame ---------- */

const Window = styled.div`
  display: flex;
  flex-direction: column;
  height: 100vh;
  border: 1px solid #1a84da;
  border-top: 0;
  background: #d0d3dc;
`;

const TitleBar = styled.header`
  display: flex;
  align-items: center;
  height: 31px;
  padding-left: 8px;
  background: #0078d7;
  color: #fff;
`;

const Title = styled.h1`
  flex: 1;
  margin: 0 0 0 5px;
  font-size: 11px;
  font-weight: 400;
`;

const CaptionButton = styled.button`
  display: flex;
  align-items: center;
  justify-content: center;
  width: 46px;
  height: 30px;
`;

const MenuBar = styled.nav`
  display: flex;
  align-items: center;
  height: 24px;
  padding: 0 3px;
`;

const Grip = styled.span`
  width: 2px;
  height: ${({ $h = 16 }) => $h}px;
  margin: 0 4px 0 3px;
  background: repeating-linear-gradient(#a9aeb9 0 2px, #f4f6fa 2px 3px, transparent 3px 4px);
`;

const MenuItem = styled.button`
  margin-left: ${({ $first }) => ($first ? 9 : 16)}px;
  font-size: 11px;
  line-height: 20px;
  color: #4c505a;
`;

const MdiButtons = styled.div`
  display: flex;
  gap: 2px;
  margin: 6px 0 0 auto;
`;

const MdiButton = styled.button`
  width: 14px;
  height: 14px;
  display: grid;
  place-items: center;
`;

/* ---------- toolbars ---------- */

const ToolRow = styled.div`
  display: flex;
  gap: 2px;
  height: 26px;
  padding: 0 1px;
`;

const ToolStrip = styled.div`
  display: flex;
  align-items: center;
  height: 26px;
  padding-right: 1px;
  border-bottom: 1px solid #a3a7b1;
  border-radius: 2px;
  background: linear-gradient(#ebeff8, #d3d7e1);
`;

const ToolButton = styled.button`
  display: flex;
  align-items: center;
  justify-content: center;
  width: 22px;
  height: 22px;
  flex: none;
  ${({ $on }) =>
    $on &&
    css`
      border: 1px solid #b9a480;
      background: linear-gradient(#fbd29b, #fcc46c 45%, #ffe9a0);
    `}
`;

const MenuArrow = styled.button`
  display: grid;
  place-items: center;
  width: 13px;
  height: 22px;
  flex: none;
`;

const Separator = styled.span`
  width: 2px;
  height: 16px;
  margin: 0 3px;
  flex: none;
  border-left: 1px solid #a9aeb9;
  border-right: 1px solid #f6f8fb;
`;

const LoadSelect = styled.select`
  appearance: none;
  width: 216px;
  height: 19px;
  margin: 0 2px;
  padding: 0 20px 0 3px;
  border: 1px solid #fff;
  border-radius: 0;
  background:
    linear-gradient(45deg, transparent 50%, #777c87 50%) right 7px top 6px / 4px 4px no-repeat,
    linear-gradient(135deg, #777c87 50%, transparent 50%) right 3px top 6px / 4px 4px no-repeat,
    linear-gradient(#e4e7ee, #d3d7e0) right 0 top 0 / 14px 100% no-repeat,
    #fff;
`;

/* ---------- docked panels ---------- */

const Body = styled.main`
  display: flex;
  flex: 1;
  min-height: 0;
`;

const Side = styled.aside`
  display: flex;
  flex-direction: column;
  width: 284px;
  flex: none;
  padding-left: 1px;
`;

const PanelTitle = styled.div`
  display: flex;
  align-items: center;
  gap: 2px;
  height: 20px;
  padding: 0 1px 1px 3px;
  background: #b9bfca;
  color: #43464e;
`;

const PanelName = styled.h2`
  flex: 1;
  margin: 0;
  font-size: 11px;
  font-weight: 400;
`;

const PanelButton = styled.button`
  display: grid;
  place-items: center;
  width: 15px;
  height: 15px;
`;

const TreeFrame = styled.div`
  display: flex;
  flex-direction: column;
  flex: 1;
  min-height: 0;
  margin: 2px 2px 0 2px;
  border: 1px solid #8b9099;
  border-color: #8b9099 #f4f4f4 #f4f4f4 #8b9099;
  background: #f0f0f0;
`;

const TreeScroll = styled.div`
  display: flex;
  flex: 1;
  min-height: 0;
`;

const TreeList = styled.ul`
  flex: 1;
  min-width: 0;
  margin: 0;
  padding: 0 0 0 2px;
  list-style: none;
  overflow: hidden;
  background: #fcfbf3;
`;

const TreeRow = styled.li`
  display: flex;
  align-items: center;
  height: 18px;
  white-space: nowrap;
  font-weight: ${({ $bold }) => ($bold ? 700 : 400)};
`;

const dotsDown = "repeating-linear-gradient(#8c8c86 0 1px, transparent 1px 2px)";
const dotsRight = "repeating-linear-gradient(90deg, #8c8c86 0 1px, transparent 1px 2px)";

const Guide = styled.span`
  display: flex;
  align-items: center;
  justify-content: center;
  width: 19px;
  height: 18px;
  flex: none;
  padding-top: 1px;
  background:
    ${({ $across }) => ($across ? `${dotsRight} 9px 9px / 10px 1px no-repeat` : "none")},
    ${({ $down }) =>
      $down === "full"
        ? `${dotsDown} 9px 0 / 1px 18px no-repeat`
        : $down === "half"
          ? `${dotsDown} 9px 0 / 1px 10px no-repeat`
          : "none"};
`;

const Expander = styled.button`
  width: 9px;
  height: 9px;
  border: 1px solid #919191;
  background:
    linear-gradient(#2b4a9b, #2b4a9b) 1px 3px / 5px 1px no-repeat,
    ${({ $open }) => ($open ? "" : "linear-gradient(#2b4a9b, #2b4a9b) 3px 1px / 1px 5px no-repeat,")}
    #fff;
`;

const TreeIcon = styled.span`
  width: 22px;
  flex: none;
  padding-left: 1px;
`;

const ScrollBar = styled.div`
  display: flex;
  flex-direction: ${({ $row }) => ($row ? "row" : "column")};
  flex: none;
  background: #f0f0f0;
  ${({ $row }) => ($row ? "height: 17px; margin-right: 17px;" : "width: 17px;")}
`;

const ScrollButton = styled.button`
  display: grid;
  place-items: center;
  width: 17px;
  height: 17px;
  flex: none;
`;

const ScrollTrack = styled.div`
  display: flex;
  flex-direction: ${({ $row }) => ($row ? "row" : "column")};
  flex: 1;
  padding-top: ${({ $lead = 0 }) => $lead}px;
`;

const ScrollThumb = styled.div`
  flex: 0 0 ${({ $size }) => $size};
  width: ${({ $narrow }) => ($narrow ? "15px" : "auto")};
  background: #cdcdcd;
`;

const SideTabs = styled.div`
  display: flex;
  align-items: center;
  gap: 4px;
  height: 24px;
  padding: 0 3px;
`;

const SideTab = styled.button`
  display: flex;
  align-items: center;
  gap: 1px;
  height: 20px;
  padding: 0 3px;
  font-size: 11px;
  color: #4c505a;
  ${({ $on }) =>
    $on &&
    css`
      border-radius: 0 0 3px 3px;
      background: #eceff5;
      box-shadow: 1px 1px 0 #fff;
    `}
`;

const Work = styled.div`
  display: flex;
  flex-direction: column;
  flex: 1;
  min-width: 0;
  padding: 0 1px 0 5px;
`;

const Viewport = styled.section`
  display: flex;
  flex: 1;
  min-height: 0;
  border: 1px solid #6a6a6a;
  border-color: #6a6a6a #e3e3e3 #e3e3e3 #6a6a6a;
  background: #fff;
`;

const ModelSvg = styled.svg`
  width: 100%;
  height: 100%;
`;

const DataPanel = styled.section`
  display: flex;
  flex-direction: column;
  margin-top: 5px;
  background: #f0f0f0;
`;

const DataTools = styled.div`
  display: flex;
  align-items: center;
  height: 25px;
  padding-left: 9px;
  background: linear-gradient(#ebeff8, #cfd4dd);
`;

const GridFrame = styled.div`
  display: flex;
  padding: 2px 1px 12px 2px;
  border-top: 1px solid #696969;
  border-left: 1px solid #696969;
  font-family: "Liberation Sans", Arial, sans-serif;
  font-size: 13px;
`;

const Grid = styled.table`
  flex: 1;
  width: 100%;
  table-layout: fixed;
  border-collapse: collapse;
  border: 1px solid #a0a0a0;
`;

const Letter = styled.th`
  height: 17px;
  padding: 0;
  font-weight: 400;
  line-height: 15px;
  border: 1px solid #696969;
  background: ${({ $on }) => ($on ? "#0078d7" : "#e1e1e1")};
  color: ${({ $on }) => ($on ? "#fff" : "#000")};
`;

const Head = styled.th`
  height: ${({ $h = 19 }) => $h}px;
  padding: 0;
  font-weight: 400;
  line-height: 17px;
  background: ${({ $h }) => ($h ? "#e9e9e9" : "#f0f0f0")};
  border-right: 1px solid ${({ $open }) => ($open ? "#f0f0f0" : "#a0a0a0")};
`;

const RowHead = styled.th`
  height: 19px;
  padding: 0;
  font-weight: 400;
  line-height: 17px;
  border: 1px solid #696969;
  background: ${({ $on }) => ($on ? "#0078d7" : "#e1e1e1")};
  color: ${({ $on }) => ($on ? "#fff" : "#000")};
`;

const Cell = styled.td`
  height: 19px;
  padding: 0 4px;
  line-height: 17px;
  text-align: ${({ $align = "left" }) => $align};
  border: 1px solid #a0a0a0;
  background: ${({ $on }) => ($on ? "#eaeaea" : "#fff")};
  outline: ${({ $focus }) => ($focus ? "1px dotted #000" : "none")};
  outline-offset: -2px;
`;

const SheetTabs = styled.div`
  display: flex;
  height: 36px;
  border-top: 1px solid #696969;
  font-family: "Liberation Sans", Arial, sans-serif;
`;

const SheetTab = styled.button`
  height: 18px;
  min-width: 38px;
  padding: 0 3px;
  font-size: 11px;
  white-space: nowrap;
  border: solid #696969;
  border-width: 0 1px 1px 0;
  border-radius: 0 0 4px 3px;
  background: ${({ $on }) => ($on ? "#f0f0f0" : "#e6e6e6")};
  ${({ $on }) => $on && "border-bottom-color: #f0f0f0;"}
`;

const SheetNav = styled.div`
  display: flex;
  margin-left: auto;
`;

const SheetNavButton = styled.button`
  display: grid;
  place-items: center;
  width: 16px;
  height: 16px;
  border: 1px solid #fff;
  border-right-color: #777;
  border-bottom-color: #777;
  background: #f0f0f0;
`;

const StatusBar = styled.footer`
  display: flex;
  align-items: center;
  height: 22px;
  padding-left: 4px;
  border-top: 1px solid #989ca4;
  background: linear-gradient(#e2e5ea, #c2c7d0 35%, #aeb3bd 50%, #b9bfca);
  color: #2c2e33;
`;

const Spacer = styled.div`
  flex: 1;
`;

const Toggle = styled.button`
  height: 18px;
  margin-right: 3px;
  padding: 0 1px;
  font-size: 12px;
  line-height: 15px;
  border: 1px solid;
  border-color: ${({ $on }) => ($on ? "#111 #fff #fff #111" : "#f2f4f7 #8c9098 #8c9098 #f2f4f7")};
`;

const Pane = styled.div`
  width: ${({ $w }) => $w}px;
  padding: 0 ${({ $right }) => ($right ? 16 : 2)}px;
  text-align: ${({ $right }) => ($right ? "right" : "left")};
  white-space: pre;
  line-height: 16px;
  border-left: 1px solid #92969f;
`;

/* ---------- data ---------- */

const MENU = [
  ["", "F", "ile"],
  ["", "E", "dit"],
  ["", "V", "iew"],
  ["", "I", "nsert"],
  ["", "C", "alculate"],
  ["", "R", "esults"],
  ["", "T", "ools"],
  ["Ta", "b", "le"],
  ["", "O", "ptions"],
  ["", "A", "dd-on Modules"],
  ["", "W", "indow"],
  ["", "H", "elp"],
];

// "name", "name:on" for a pressed button, "name:menu" for one with a drop arrow, "|" for a rule
const ROW_ONE = [
  "new open archive archiveBlue save notes print preview | undo redo | selPara selEllipse selRing selPlus selWindow | navigator:on tables:on | loadStar combo prev next showLoads loadValues eye resultValues | glasses beadsWin beads",
  "handGrid gridSun planeXY:on planeYZ planeXZ skewGrid snapWin | moveCopy rotate mirror connect info gearBox gears",
  "exportDown exportUp pdfDown pdfUp",
];

const ROW_TWO = [
  "newNode:menu newLine newMember:menu newArc:menu | nodeSupport lineSupport surfSupport | dimension:menu comment region | newSurface:menu opening:menu curved:menu solid newSet:menu | combine:menu nodalLoad memberLoad lineLoad surfLoad solidLoad:menu",
  "hand zoomWin zoomX cube cubes | viewX viewY viewZ viewMY:menu microscope:menu | render:menu",
  "frame camera | memberRes surfRes solidRes reactions sections multiView:menu diagram resTables | legend deform:menu palette:menu",
];

const DATA_TOOLS =
  "tblEdit:on tblInsert tblDown tblResult tblWave | colPrev colNext | stepA:on stepB:on refresh | rowA rowB rowC | rowX | delRow delLeft delRight | tblYellow tblBlue | pencilTbl | handTable glasses excel calc | abWin fx fxDel | lock";

const MODEL_DATA = [
  ["Nodes", "node", true],
  ["Lines", "line", true],
  ["Materials", "material", true],
  ["Surfaces", "surface"],
  ["Solids", "solid"],
  ["Openings", "opening"],
  ["Nodal Supports", "support", true],
  ["Line Supports", "lineSupport"],
  ["Surface Supports", "surfaceSupport"],
  ["Line Hinges", "hinge"],
  ["Variable Thicknesses", "thick"],
  ["Orthotropic Surfaces and Membranes", "ortho"],
  ["Cross-Sections", "section", true],
  ["Member Hinges", "memberHinge", true],
  ["Member Eccentricities", "ecc"],
  ["Member Divisions", "division"],
  ["Members", "member", true],
  ["Ribs", "rib"],
  ["Member Elastic Foundations", "elastic"],
  ["Member Nonlinearities", "nonlinear"],
  ["Sets of Members", "sets", true],
  ["Intersections of Surfaces", "intersect"],
  ["FE Mesh Refinements", "mesh"],
  ["Nodal Releases"],
  ["Line Release Types"],
  ["Line Releases", "hinge"],
  ["Surface Release Types", "release"],
  ["Surface Releases", "release"],
  ["Connection of Two Members"],
  ["Joints"],
  ["Nodal Constraints", "constraint"],
];

const MODULES = [
  ["RF-STEEL Surfaces - General stress", "surf"],
  ["RF-STEEL Members - General stress", ""],
  ["RF-STEEL EC3 - Design of steel members", "EC"],
  ["RF-STEEL AISC - Design of steel members", "AISC"],
  ["RF-STEEL IS - Design of steel members", "IS"],
  ["RF-STEEL SIA - Design of steel members", "SIA"],
  ["RF-STEEL BS - Design of steel members", "BS"],
  ["RF-STEEL GB - Design of steel members", "GB"],
  ["RF-STEEL CSA - Design of steel members", "CSA"],
  ["RF-STEEL AS - Design of steel members", "AS"],
  ["RF-STEEL NTC-DF - Design of steel", "NTC"],
  ["RF-STEEL SP - Design of steel members", "SP"],
];

const TREE = [
  {
    label: "Model Data",
    open: true,
    children: MODEL_DATA.map(([label, emblem, more]) => ({
      label,
      icon: <FolderIcon emblem={emblem} />,
      more,
    })),
  },
  {
    label: "Load Cases and Combinations",
    open: true,
    children: [
      { label: "Load Cases", icon: <Svg>{ICONS.loadCase}</Svg>, more: true },
      { label: "Load Combinations", icon: <Svg>{ICONS.loadCombo}</Svg>, more: true },
      { label: "Result Combinations", icon: <Svg>{ICONS.resultCombo}</Svg>, more: true },
    ],
  },
  { label: "Loads", more: true },
  { label: "Results", more: true },
  { label: "Sections" },
  { label: "Average Regions" },
  { label: "Printout Reports" },
  { label: "Guide Objects", more: true },
  {
    label: "Add-on Modules",
    open: true,
    children: MODULES.map(([label, tag]) => ({ label, icon: <ModuleIcon tag={tag} />, continues: true })),
  },
];

const NODES = [
  ["Standard", "0", "artesian", "31.50", "32.81", "0.00"],
  ["Standard", "0", "artesian", "102.36", "32.81", "0.00"],
  ["Standard", "0", "artesian", "-2.93", "35.30", "2.61"],
  ["Standard", "0", "artesian", "-2.93", "35.20", "2.71"],
];

const SHEETS = [
  "Nodes",
  "Lines",
  "Materials",
  "Surfaces",
  "Solids",
  "Openings",
  "Nodal Supports",
  "Line Supports",
  "Surface Supports",
  "Line Hinges",
  "Cross-Sections",
  "Member Hinges",
  "Member Eccentricities",
  "Member Divisions",
  "Members",
  "Member Elastic Foundations",
];

const TOGGLES = [
  ["SNAP", true],
  ["GRID", false],
  ["CARTES", true],
  ["OSNAP", true],
  ["GLINES", true],
  ["DXF", true],
];

/* ---------- structural model ---------- */

const PURLINS = 43;
const PANELS = 18;
const STEP = [24.82, 9.65];
const BAY = [58.8, 22.88];

const topTip = (i) => [439.3 + STEP[0] * i, 241 + STEP[1] * i];
const bottomTip = (i) => [380 + STEP[0] * i, 355 + STEP[1] * i];
const topChord = (i) => [426 + STEP[0] * i, 267.3 + STEP[1] * i];
const bottomChord = (i) => [393.7 + STEP[0] * i, 329 + STEP[1] * i];
const topJoint = (k) => [447.5 + BAY[0] * k, 276.4 + BAY[1] * k];
const midJoint = (k) => [447.5 + BAY[0] * k, 320.4 + 22.8 * k];
const bottomJoint = (k) => [416.6 + 58.75 * k, 337 + 22.85 * k];

const HINGES = [
  [454, 279], [422, 340], [594, 377], [693, 372], [823, 422], [791, 484], [882, 489],
  [953, 473], [921, 534], [1169, 601], [1345, 625], [1313, 657], [1313, 687],
];

const NODE = "#800000";

const seg = ([x1, y1], [x2, y2]) => `M${x1} ${y1}L${x2} ${y2}`;
const range = (from, to) => Array.from({ length: to - from + 1 }, (_, i) => from + i);

const Joint = ({ at: [x, y], n = 0 }) => (
  <g fill={NODE}>
    <circle cx={x - 4} cy={y - 1} r="2.2" />
    <circle cx={x} cy={y - 2 + (n % 2)} r="2.2" />
    <circle cx={x - 1} cy={y + 1} r="2.4" />
    <circle cx={x + 3} cy={y + 2} r="2.2" />
    <circle cx={x + 3 + (n % 2)} cy={y} r="1.8" />
  </g>
);

const MidJoint = ({ at: [x, y] }) => (
  <g fill={NODE}>
    <circle cx={x - 3} cy={y - 1} r="2.3" />
    <circle cx={x + 2} cy={y - 2} r="2.3" />
    <circle cx={x} cy={y} r="2.8" />
    <circle cx={x - 2} cy={y + 2} r="2.3" />
    <circle cx={x + 3} cy={y + 2} r="2.3" />
  </g>
);

const Hinge = ({ at: [x, y] }) => (
  <path d={`M${x - 3.5} ${y}l3.5-3.5 3.5 3.5-3.5 3.5z`} fill="#fff" stroke="#1a9090" strokeWidth="1.2" />
);

const Footing = ({ x, y }) => (
  <g>
    <path d={`M${x - 10} ${y}l10-4 10 4v2l-10 4-10-4z`} fill="#70f070" />
    <path d={`M${x - 7} ${y}l7-3 7 3-7 3z`} fill="#30c030" />
  </g>
);

const ARC = "M683 368q9 5 8.500 18q-1 20-12 32q-9 11-17 15l-8-2";

const Tower = () => (
  <g fill="none">
    <Footing x={647} y={482} />
    <Footing x={688} y={459} />
    <path d="M647 469v13M688 446v13" stroke="#6a6ae0" strokeWidth="5" />
    <path d="M658 441l-11 28M660 434l-13 35" stroke="#2828c8" strokeWidth="2.5" />
    <path d="M674 430l14 15M672 427l-17 26M657 441l31 6" stroke="#5c5cdc" strokeWidth="1.8" />
    <path d={ARC} stroke="#5a1446" strokeWidth="4" />
    <path d={ARC} stroke="#a03060" strokeWidth="1.5" strokeDasharray="2 2" />
    <path d="M667 406l-6 27M669 406l6 20" stroke="#000" strokeWidth="3" strokeDasharray="6 2" />
    <g fill={NODE}>
      <circle cx="667.7" cy="399.5" r="1.8" />
      <circle cx="647" cy="470" r="2" />
      <circle cx="647" cy="481" r="1.8" />
      <circle cx="688" cy="459" r="1.8" />
      <circle cx="653" cy="461" r="2" />
      <circle cx="691" cy="445" r="2" />
      <circle cx="688" cy="447" r="2" />
      <circle cx="656" cy="440" r="2.4" />
      <circle cx="660" cy="440" r="2.4" />
      <circle cx="667" cy="435" r="2.2" />
      <circle cx="676" cy="429" r="2.4" />
      <circle cx="673" cy="432" r="2.2" />
    </g>
    <Hinge at={[666.5, 405]} />
    <Hinge at={[669.5, 405]} />
    <Hinge at={[660.5, 433.5]} />
    <Hinge at={[675, 423.5]} />
  </g>
);

const Model = () => {
  const inner = range(1, 16);
  const dashed = inner
    .filter((k) => k < 16)
    .map(
      (k) =>
        seg(midJoint(k), topJoint(k + 1)) +
        seg(midJoint(k), bottomJoint(k + 1)) +
        seg(topJoint(k), bottomJoint(k + 1))
    )
    .join("");
  const dotted = inner
    .map((k) => seg(topJoint(k), bottomJoint(k)) + seg(bottomJoint(k - 1), midJoint(k)))
    .join("");
  const thin = inner
    .filter((k) => k < 16)
    .map((k) => seg(topJoint(k), midJoint(k + 1)))
    .join("");

  return (
    <ModelSvg viewBox="291 108 1306 834" preserveAspectRatio="xMinYMin" role="img" aria-label="Structural model">
      <g fill="none">
        <path
          d={dashed + seg(bottomJoint(0), topJoint(1)) + seg(topJoint(0), bottomJoint(1))}
          stroke="#9090c8"
          strokeWidth=".8"
          strokeDasharray="4 2"
        />
        <path
          d={
            dotted +
            seg(topJoint(0), bottomJoint(0)) +
            seg(topJoint(17), bottomJoint(17)) +
            seg(topJoint(16), bottomJoint(17))
          }
          stroke="#8888c4"
          strokeWidth=".8"
          strokeDasharray="2 2"
        />
        <path d={thin} stroke="#a8a8dc" strokeWidth=".8" strokeDasharray="7 2" />
        <path
          d={
            inner.map((k) => seg(midJoint(k), bottomJoint(k))).join("") +
            seg(topJoint(0), midJoint(1)) +
            seg(bottomJoint(0), midJoint(1)) +
            seg(midJoint(16), topJoint(17)) +
            seg(midJoint(16), bottomJoint(17))
          }
          stroke="#b4b4f0"
          strokeWidth="1.5"
        />
        <path d={inner.map((k) => seg(topJoint(k), midJoint(k))).join("")} stroke="#c0c0f4" strokeWidth="1.8" />
        <path
          d={
            range(0, PURLINS - 1).map((i) => seg(topTip(i), bottomTip(i))).join("") +
            seg([1486.7, 658.3], [1468.3, 693.3])
          }
          stroke="#7878f4"
          strokeWidth="2"
        />
        <path
          d={seg([426, 267.3], [1478.3, 676.3]) + seg([393.7, 329], [1436.7, 734.7])}
          stroke="#7070ec"
          strokeWidth="2"
        />
        <path d={seg(midJoint(1), midJoint(16))} stroke="#7070dc" strokeWidth="3" />
      </g>
      <Tower />
      <g transform="translate(529 205)">
        <Tower />
      </g>
      <g fill={NODE}>
        {range(0, PURLINS - 1).map((i) =>
          [topTip(i), bottomTip(i), topChord(i), bottomChord(i)].map(([x, y], n) => (
            <circle key={`${i}-${n}`} cx={x} cy={y} r="2.1" />
          ))
        )}
        {[[1486.7, 658.3], [1468.3, 693.3], [1478.3, 676.3], [1436.7, 734.7]].map(([x, y]) => (
          <circle key={x} cx={x} cy={y} r="2.1" />
        ))}
        {HINGES.map(([x, y]) => (
          <circle key={x + y} cx={x - 6.5} cy={y - 2.5} r="1.8" />
        ))}
      </g>
      {range(0, PANELS - 1).map((k) => (
        <Fragment key={k}>
          <Joint at={topJoint(k)} n={k} />
          <Joint at={bottomJoint(k)} n={k + 1} />
        </Fragment>
      ))}
      {inner.map((k) => (
        <MidJoint key={k} at={midJoint(k)} />
      ))}
      {HINGES.map((at) => (
        <Hinge key={at.join()} at={at} />
      ))}
      <g fill="none" strokeWidth="2">
        <path d="M347 818v-28" stroke="#0000f0" />
        <path d="M347 781l3 10h-6z" fill="#0000e0" />
        <path d="M347 818l20-10" stroke="#00e818" />
        <path d="M374 803l-5 7-4-5z" fill="#00a010" />
        <path d="M347 818l24 8" stroke="#f00000" />
        <path d="M379 830l-9 0 2-6z" fill="#d00000" />
      </g>
      <Txt x="344" y="778" s="9" c="#0000e0">Z</Txt>
      <Txt x="376" y="804" s="9" c="#00d818">Y</Txt>
      <Txt x="382" y="837" s="9" c="#f00000">X</Txt>
    </ModelSvg>
  );
};

/* ---------- pieces ---------- */

const Chevron = ({ d }) => (
  <svg width="9" height="9" viewBox="0 0 9 9" aria-hidden="true">
    <path d={d} fill="none" stroke="#505050" strokeWidth="2" />
  </svg>
);

const CHEVRONS = {
  up: "M1 6.5L4.5 3 8 6.5",
  down: "M1 2.5L4.5 6 8 2.5",
  left: "M6.5 1L3 4.5 6.5 8",
  right: "M2.5 1L6 4.5 2.5 8",
};

const ToolItems = ({ items }) =>
  items.split(" ").map((item, i) => {
    if (item === "|") return <Separator key={i} />;
    if (item === "combo") {
      return (
        <LoadSelect key={i} aria-label="Load case" defaultValue="RC1 - All">
          <option>RC1 - All</option>
        </LoadSelect>
      );
    }
    const [name, flag] = item.split(":");
    return (
      <Fragment key={i}>
        <ToolButton aria-label={name} $on={flag === "on"}>
          <Svg>{ICONS[name]}</Svg>
        </ToolButton>
        {flag === "menu" && (
          <MenuArrow aria-label={`${name} menu`}>
            <svg width="7" height="4" viewBox="0 0 7 4" aria-hidden="true">
              <path d="M1 0h5L3.5 3.500z" fill="#7d828c" />
            </svg>
          </MenuArrow>
        )}
      </Fragment>
    );
  });

const PanelHeader = ({ title }) => (
  <PanelTitle>
    <PanelName>{title}</PanelName>
    <PanelButton aria-label="Pin">
      <svg width="9" height="10" viewBox="0 0 9 10" aria-hidden="true">
        <path d="M2.5 6V.5h4V6M5.5 1v5M1 6.5h7M4.500 7v3" fill="none" stroke="#666a73" />
      </svg>
    </PanelButton>
    <PanelButton aria-label="Close panel">
      <svg width="9" height="9" viewBox="0 0 9 9" aria-hidden="true">
        <path d="M1 1l7 7M8 1L1 8" stroke="#666a73" strokeWidth="1.3" />
      </svg>
    </PanelButton>
  </PanelTitle>
);

const Branch = ({ item, last }) => (
  <Fragment>
    <TreeRow>
      <Guide />
      <Guide $down={last && !item.open ? "half" : "full"} $across>
        {(item.open || item.more) && <Expander aria-label={`Toggle ${item.label}`} $open={item.open} />}
      </Guide>
      <TreeIcon>
        <FolderIcon open={item.open} />
      </TreeIcon>
      {item.label}
    </TreeRow>
    {item.children?.map((child, i) => (
      <TreeRow key={child.label}>
        <Guide />
        <Guide $down="full" />
        <Guide $down={i < item.children.length - 1 || child.continues ? "full" : "half"} $across>
          {child.more && <Expander aria-label={`Toggle ${child.label}`} />}
        </Guide>
        <TreeIcon>{child.icon}</TreeIcon>
        {child.label}
      </TreeRow>
    ))}
  </Fragment>
);

const Navigator = () => {
  const [tab, setTab] = useState("Data");

  return (
    <Side>
      <PanelHeader title="Project Navigator - Data" />
      <TreeFrame>
        <TreeScroll>
          <TreeList>
            <TreeRow $bold>
              <Guide $down="half" $across>
                <Expander aria-label="Toggle project" $open />
              </Guide>
              <TreeIcon>
                <Svg>{ICONS.project}</Svg>
              </TreeIcon>
              template Nexans*
            </TreeRow>
            {TREE.map((item, i) => (
              <Branch key={item.label} item={item} last={i === TREE.length - 1} />
            ))}
          </TreeList>
          <ScrollBar>
            <ScrollButton aria-label="Scroll up">
              <Chevron d={CHEVRONS.up} />
            </ScrollButton>
            <ScrollTrack $lead={9}>
              <ScrollThumb $size="49%" $narrow />
            </ScrollTrack>
            <ScrollButton aria-label="Scroll down">
              <Chevron d={CHEVRONS.down} />
            </ScrollButton>
          </ScrollBar>
        </TreeScroll>
        <ScrollBar $row>
          <ScrollButton aria-label="Scroll left">
            <Chevron d={CHEVRONS.left} />
          </ScrollButton>
          <ScrollTrack $row>
            <ScrollThumb $size="41%" />
          </ScrollTrack>
          <ScrollButton aria-label="Scroll right">
            <Chevron d={CHEVRONS.right} />
          </ScrollButton>
        </ScrollBar>
      </TreeFrame>
      <SideTabs>
        {["Data", "Display", "Views"].map((name) => (
          <SideTab key={name} $on={tab === name} onClick={() => setTab(name)}>
            <Svg size={16}>{ICONS[`${name.toLowerCase()}Tab`]}</Svg>
            {name}
          </SideTab>
        ))}
      </SideTabs>
    </Side>
  );
};

const NodesTable = () => (
  <Grid>
    <colgroup>
      {[53, 100, 86, 108, 93, 93, 93].map((w, i) => (
        <col key={i} style={{ width: w }} />
      ))}
      <col />
    </colgroup>
    <thead>
      <tr>
        <Head $h={55} rowSpan={3} scope="col">
          Node
          <br />
          No.
        </Head>
        {"ABCDEFG".split("").map((c) => (
          <Letter key={c} $on={c === "A"} scope="col">
            {c}
          </Letter>
        ))}
      </tr>
      <tr>
        <Head />
        <Head>Reference</Head>
        <Head>Coordinate</Head>
        <Head colSpan={3}>Node Coordinates</Head>
        <Head />
      </tr>
      <tr>
        {["Node Type", "Node", "System", "X [ft]", "Y [ft]", "Z [ft]", "Comment"].map((h) => (
          <Head key={h} scope="col">
            {h}
          </Head>
        ))}
      </tr>
    </thead>
    <tbody>
      {NODES.map(([type, ref, system, x, y, z], i) => {
        const on = i === 0;
        return (
          <tr key={i}>
            <RowHead scope="row" $on={on}>
              {i + 1}
            </RowHead>
            <Cell $on={on} $focus={on}>{type}</Cell>
            <Cell $on={on} $align="center">{ref}</Cell>
            <Cell $on={on}>
              <u>C</u>
              {system}
            </Cell>
            <Cell $on={on} $align="right">{x}</Cell>
            <Cell $on={on} $align="right">{y}</Cell>
            <Cell $on={on} $align="right">{z}</Cell>
            <Cell $on={on} />
          </tr>
        );
      })}
    </tbody>
  </Grid>
);

const NAV_SHAPES = [
  ["First sheet", "M2 1v7M8 1L4 4.5 8 8z", "#8c8c8c"],
  ["Previous sheet", "M6 1L2.5 4.5 6 8z", "#8c8c8c"],
  ["Next sheet", "M3 1l3.500 3.500L3 8z", "#000"],
  ["Last sheet", "M1 1l4 3.500L1 8zM7.500 1v7", "#000"],
];

const DataTable = () => {
  const [sheet, setSheet] = useState("Nodes");

  return (
    <DataPanel>
      <PanelHeader title="1.1 Nodes" />
      <DataTools>
        <ToolItems items={DATA_TOOLS} />
      </DataTools>
      <GridFrame>
        <NodesTable />
        <ScrollBar>
          <ScrollButton aria-label="Scroll up">
            <Chevron d={CHEVRONS.up} />
          </ScrollButton>
          <ScrollTrack>
            <ScrollThumb $size="17px" />
          </ScrollTrack>
          <ScrollButton aria-label="Scroll down">
            <Chevron d={CHEVRONS.down} />
          </ScrollButton>
        </ScrollBar>
      </GridFrame>
      <SheetTabs>
        {SHEETS.map((name) => (
          <SheetTab key={name} $on={sheet === name} onClick={() => setSheet(name)}>
            {name}
          </SheetTab>
        ))}
        <SheetNav>
          {NAV_SHAPES.map(([label, d, c]) => (
            <SheetNavButton key={label} aria-label={label}>
              <svg width="9" height="9" viewBox="0 0 9 9" aria-hidden="true">
                <path d={d} fill={c} stroke={c} />
              </svg>
            </SheetNavButton>
          ))}
        </SheetNav>
      </SheetTabs>
    </DataPanel>
  );
};

const App = () => (
  <Window>
    <GlobalStyle />
    <TitleBar>
      <Svg size={16}>{ICONS.appLogo}</Svg>
      <Title>RFEM 5.26.01 x64 - [template Nexans*]</Title>
      <CaptionButton aria-label="Minimize">
        <svg width="10" height="10" viewBox="0 0 10 10" aria-hidden="true">
          <path d="M0 5.5h10" stroke="#fff" />
        </svg>
      </CaptionButton>
      <CaptionButton aria-label="Maximize">
        <svg width="10" height="10" viewBox="0 0 10 10" aria-hidden="true">
          <path d="M.5.5h9v9h-9z" fill="none" stroke="#fff" />
        </svg>
      </CaptionButton>
      <CaptionButton aria-label="Close">
        <svg width="10" height="10" viewBox="0 0 10 10" aria-hidden="true">
          <path d="M0 0l10 10M10 0L0 10" stroke="#fff" strokeWidth="1.2" />
        </svg>
      </CaptionButton>
    </TitleBar>
    <MenuBar>
      <Grip $h={12} />
      <Svg size={16}>{ICONS.dlubal}</Svg>
      {MENU.map(([pre, key, rest], i) => (
        <MenuItem key={pre + key + rest} $first={i === 0}>
          {pre}
          <u>{key}</u>
          {rest}
        </MenuItem>
      ))}
      <MdiButtons>
        <MdiButton aria-label="Minimize document">
          <svg width="8" height="10" viewBox="0 0 8 10" aria-hidden="true">
            <path d="M0 8h7" stroke="#777" strokeWidth="2" />
            <path d="M0 9.5h7" stroke="#fff" />
          </svg>
        </MdiButton>
        <MdiButton aria-label="Restore document">
          <svg width="10" height="10" viewBox="0 0 10 10" aria-hidden="true">
            <path d="M2.5 3V1h7v5H8M.5 3.5h7v5h-7zM0 4h8" fill="none" stroke="#888" />
          </svg>
        </MdiButton>
        <MdiButton aria-label="Close document">
          <svg width="10" height="10" viewBox="0 0 10 10" aria-hidden="true">
            <path d="M1 1l8 8M9 1L1 9" stroke="#888" strokeWidth="2" />
          </svg>
        </MdiButton>
      </MdiButtons>
    </MenuBar>
    {[ROW_ONE, ROW_TWO].map((row, r) => (
      <ToolRow key={r}>
        {row.map((items) => (
          <ToolStrip key={items}>
            <Grip />
            <ToolItems items={items} />
          </ToolStrip>
        ))}
      </ToolRow>
    ))}
    <Body>
      <Navigator />
      <Work>
        <Viewport>
          <Model />
        </Viewport>
        <DataTable />
      </Work>
    </Body>
    <StatusBar>
      Workplane
      <Spacer />
      {TOGGLES.map(([name, on]) => (
        <Toggle key={name} $on={on}>
          {name}
        </Toggle>
      ))}
      <Pane $w={191} $right>CS: Global XYZ</Pane>
      <Pane $w={88}>Plane: XY</Pane>
      <Pane $w={74}>X:  106.56 ft</Pane>
      <Pane $w={74}>Y:  -36.75 ft</Pane>
      <Pane $w={91}>Z:  0.00 ft</Pane>
    </StatusBar>
  </Window>
);

export default App;
